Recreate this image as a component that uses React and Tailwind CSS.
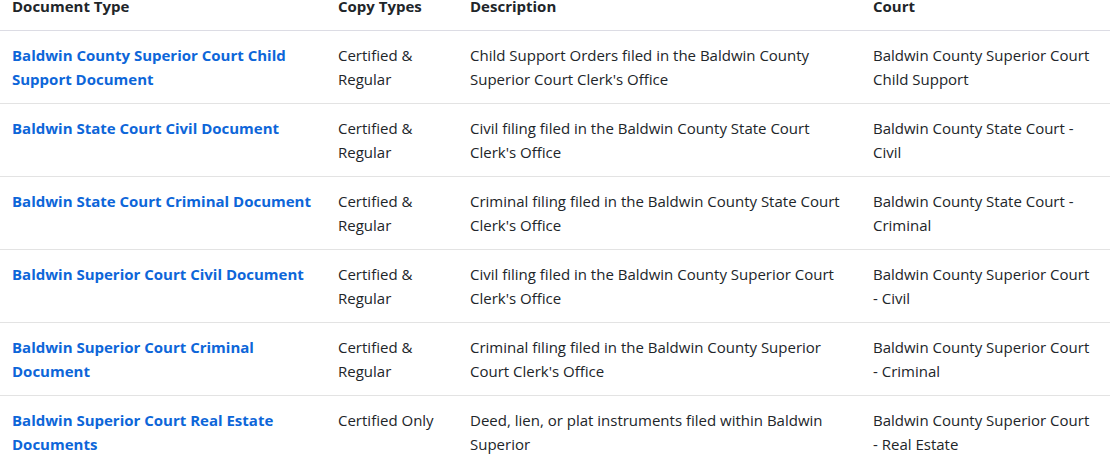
import React from "react";

const rows = [
  [["Baldwin County Superior Court Child", "Support Document"], ["Certified &", "Regular"], ["Child Support Orders filed in the Baldwin County", "Superior Court Clerk's Office"], ["Baldwin County Superior Court", "Child Support"]],
  [["Baldwin State Court Civil Document"], ["Certified &", "Regular"], ["Civil filing filed in the Baldwin County State Court", "Clerk's Office"], ["Baldwin County State Court -", "Civil"]],
  [["Baldwin State Court Criminal Document"], ["Certified &", "Regular"], ["Criminal filing filed in the Baldwin County State Court", "Clerk's Office"], ["Baldwin County State Court -", "Criminal"]],
  [["Baldwin Superior Court Civil Document"], ["Certified &", "Regular"], ["Civil filing filed in the Baldwin County Superior Court", "Clerk's Office"], ["Baldwin County Superior Court", "- Civil"]],
  [["Baldwin Superior Court Criminal", "Document"], ["Certified &", "Regular"], ["Criminal filing filed in the Baldwin County Superior", "Court Clerk's Office"], ["Baldwin County Superior Court", "- Criminal"]],
  [["Baldwin Superior Court Real Estate", "Documents"], ["Certified Only"], ["Deed, lien, or plat instruments filed within Baldwin", "Superior"], ["Baldwin County Superior Court", "- Real Estate"]],
];

function Lines({ lines }) {
  return lines.map((l, i) => (
    <React.Fragment key={i}>
      {i > 0 && <br />}
      <span className="whitespace-nowrap">{l}</span>
    </React.Fragment>
  ));
}

export default function App() {
  return (
    <div className="w-[1110px] h-[455px] overflow-hidden bg-white text-[#212529] text-[15px] leading-6" style={{ fontFamily: '"Open Sans", sans-serif' }}>
      <table className="w-[1110px] border-collapse table-fixed -mt-[6px]">
        <colgroup>
          <col className="w-[326px]" />
          <col className="w-[132px]" />
          <col className="w-[403px]" />
          <col className="w-[249px]" />
        </colgroup>
        <thead>
          <tr className="border-b border-[#dcdce4]">
            <th className="text-left font-bold px-3 pt-0 pb-3 align-bottom whitespace-nowrap">Document Type</th>
            <th className="text-left font-bold px-3 pt-0 pb-3 align-bottom whitespace-nowrap">Copy Types</th>
            <th className="text-left font-bold px-3 pt-0 pb-3 align-bottom whitespace-nowrap">Description</th>
            <th className="text-left font-bold px-3 pt-0 pb-3 align-bottom whitespace-nowrap">Court</th>
          </tr>
        </thead>
        <tbody>
          {rows.map((r, i) => (
            <tr key={i} className="border-b border-[#e3e3e3]">
              <td className="px-3 py-3 align-top">
                <a className="font-bold text-[#0d66d9]"><Lines lines={r[0]} /></a>
              </td>
              <td className="px-3 py-3 align-top"><Lines lines={r[1]} /></td>
              <td className="px-3 py-3 align-top"><Lines lines={r[2]} /></td>
              <td className="px-3 py-3 align-top"><Lines lines={r[3]} /></td>
            </tr>
          ))}
        </tbody>
      </table>
    </div>
  );
}
